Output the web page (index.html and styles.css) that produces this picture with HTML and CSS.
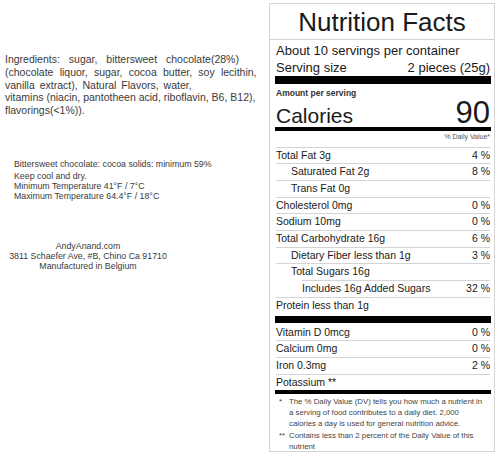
FILE: index.html
```html
<!DOCTYPE html>
<html lang="en">
<head>
<meta charset="UTF-8">
<meta name="viewport" content="width=device-width, initial-scale=1.0">
<title>Chocolate Label</title>
<link rel="stylesheet" href="styles.css">
</head>
<body>

<div class="page">
    <div class="info">
        <div class="ingredients">
            <div class="line wide">Ingredients: sugar, bittersweet chocolate(28%)</div>
            <div class="line mid">(chocolate liquor, sugar, cocoa butter, soy lecithin,</div>
            <div class="line narrow">vanilla extract), Natural Flavors, water,</div>
            <div class="line">vitamins (niacin, pantotheen acid, riboflavin, B6, B12),</div>
            <div class="line">flavorings(&lt;1%)).</div>
        </div>

        <div class="storage">
            <div class="first">Bittersweet chocolate: cocoa solids: minimum 59%</div>
            <div>Keep cool and dry.</div>
            <div>Minimum Temperature 41°F / 7°C</div>
            <div>Maximum Temperature 64.4°F / 18°C</div>
        </div>

        <div class="address">
            <div>AndyAnand.com</div>
            <div>3811 Schaefer Ave, #B, Chino Ca 91710</div>
            <div>Manufactured in Belgium</div>
        </div>
    </div>

    <div class="label">
        <h1 class="label-title">Nutrition Facts</h1>

        <div class="label-body">
            <div class="servings">About 10 servings per container</div>
            <div class="serving-size">
                <span>Serving size</span>
                <span>2 pieces (25g)</span>
            </div>
            <div class="bar thick"></div>

            <div class="amount">Amount per serving</div>
            <div class="calories">
                <span class="cal-name">Calories</span>
                <span class="cal-value">90</span>
            </div>
            <div class="bar medium"></div>
            <div class="dv-head">% Daily Value*</div>

            <div class="row"><span>Total Fat 3g</span><span>4 %</span></div>
            <div class="row sub"><span>Saturated Fat 2g</span><span>8 %</span></div>
            <div class="row sub"><span>Trans Fat 0g</span><span></span></div>
            <div class="row"><span>Cholesterol 0mg</span><span>0 %</span></div>
            <div class="row"><span>Sodium 10mg</span><span>0 %</span></div>
            <div class="row"><span>Total Carbohydrate 16g</span><span>6 %</span></div>
            <div class="row sub"><span>Dietary Fiber less than 1g</span><span>3 %</span></div>
            <div class="row sub sugars"><span>Total Sugars 16g</span><span></span></div>
            <div class="row subsub"><span>Includes 16g Added Sugars</span><span>32 %</span></div>
            <div class="row last"><span>Protein less than 1g</span><span></span></div>
            <div class="bar protein"></div>

            <div class="row vitamin"><span>Vitamin D 0mcg</span><span>0 %</span></div>
            <div class="row"><span>Calcium 0mg</span><span>0 %</span></div>
            <div class="row"><span>Iron 0.3mg</span><span>2 %</span></div>
            <div class="row last"><span>Potassium **</span><span></span></div>
            <div class="bar medium"></div>

            <div class="notes">
                <div class="note">
                    <span class="mark">*</span>
                    <span>The % Daily Value (DV) tells you how much a nutrient in a serving of food contributes to a daily diet. 2,000 calories a day is used for general nutrition advice.</span>
                </div>
                <div class="note">
                    <span class="mark">**</span>
                    <span>Contains less than 2 percent of the Daily Value of this nutrient</span>
                </div>
            </div>
        </div>
    </div>
</div>

</body>
</html>
```

FILE: styles.css
```css
body {
    margin: 0;
    background: #fff;
    font-family: "Liberation Sans", Arial, sans-serif;
    color: #222;
}

.page {
    display: grid;
    grid-template-columns: 269px 226px;
    padding-top: 3px;
}

/* left column */

.info {
    color: #3a3a3a;
}

.ingredients {
    margin: 50px 0 0 5px;
    font-size: 10.5px;
    line-height: 12.8px;
    white-space: nowrap;
}

.ingredients .wide {
    word-spacing: 6px;
}

.ingredients .mid {
    word-spacing: 3.3px;
}

.ingredients .narrow {
    word-spacing: 2px;
}

.storage {
    margin: 42px 0 0 14px;
    font-size: 8.8px;
    line-height: 10px;
    white-space: nowrap;
}

.storage .first {
    margin-bottom: 2px;
}

.address {
    margin-top: 40px;
    width: 176px;
    text-align: center;
    font-size: 8.8px;
    line-height: 10px;
    white-space: nowrap;
}

/* nutrition label */

.label {
    border: 1px solid #d4d4d4;
    height: 449px;
    box-sizing: border-box;
    color: #1a1a1a;
}

.label-title {
    margin: 0;
    height: 35px;
    line-height: 36px;
    font-size: 26px;
    font-weight: normal;
    text-align: center;
    border-bottom: 1px solid #d4d4d4;
}

.label-body {
    padding: 1.5px 4px 0 6px;
}

.servings {
    font-size: 13px;
    line-height: 17px;
    white-space: nowrap;
}

.serving-size {
    display: flex;
    justify-content: space-between;
    font-size: 13px;
    line-height: 17px;
}

.bar {
    background: #000;
    margin: 0 -1px;
}

.bar.thick {
    height: 8px;
}

.bar.medium {
    height: 4px;
}

.bar.protein {
    height: 7px;
    margin-top: 2px;
}

.amount {
    margin-top: 4px;
    font-size: 8.5px;
    font-weight: bold;
    line-height: 10px;
    color: #333;
}

.calories {
    display: flex;
    justify-content: space-between;
    align-items: baseline;
    height: 29px;
    line-height: 29px;
}

.cal-name {
    font-size: 21px;
    margin-top: 2px;
}

.cal-value {
    font-size: 31px;
}

.dv-head {
    text-align: right;
    font-size: 7px;
    line-height: 11px;
    height: 16px;
    color: #555;
    border-bottom: 1px solid #d4d4d4;
}

.row {
    display: flex;
    justify-content: space-between;
    font-size: 10.5px;
    line-height: 15.7px;
    border-bottom: 1px solid #d4d4d4;
    white-space: nowrap;
}

.row.sub {
    padding-left: 15px;
}

.row.subsub {
    padding-left: 26px;
}

.row.sugars {
    border-bottom: none;
    background: linear-gradient(#d4d4d4, #d4d4d4) no-repeat 26px 100% / calc(100% - 26px) 1px;
    padding-bottom: 1px;
}

.row.last {
    border-bottom: none;
}

.row.vitamin {
    padding-top: 2px;
}

.notes {
    padding-top: 3px;
}

.note {
    display: flex;
    font-size: 7.8px;
    line-height: 10.8px;
    color: #444;
    margin-bottom: 1px;
    padding-right: 6px;
}

.note .mark {
    flex: 0 0 auto;
    width: 10px;
    padding-left: 3px;
}
```
